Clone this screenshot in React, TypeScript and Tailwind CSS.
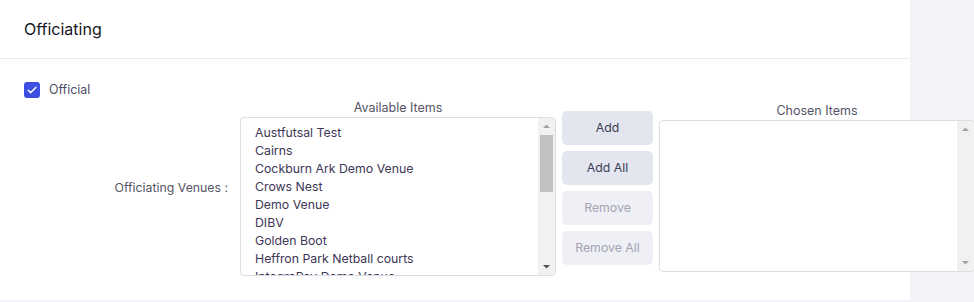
import React from "react";

const venues = [
  "Austfutsal Test",
  "Cairns",
  "Cockburn Ark Demo Venue",
  "Crows Nest",
  "Demo Venue",
  "DIBV",
  "Golden Boot",
  "Heffron Park Netball courts",
  "IntegraPay Demo Venue",
  "Kingston Park",
  "Lakeside Stadium",
];

function Arrow({ up, color }: { up: boolean; color: string }) {
  return (
    <svg width="17" height="17" viewBox="0 0 17 17">
      {up ? (
        <path d="M5 10 L12 10 L8.5 6.5 Z" fill={color} />
      ) : (
        <path d="M5 7 L12 7 L8.5 10.5 Z" fill={color} />
      )}
    </svg>
  );
}

function ScrollBar({ thumb }: { thumb: boolean }) {
  return (
    <div className="w-[17px] shrink-0 bg-[#f1f1f1] flex flex-col">
      <Arrow up color="#a3a3a3" />
      <div className="flex-1 flex flex-col">
        {thumb && <div className="mx-[2px] h-[57px] bg-[#c1c1c1]"></div>}
      </div>
      <Arrow up={false} color={thumb ? "#505050" : "#a3a3a3"} />
    </div>
  );
}

export default function App() {
  const font = { fontFamily: "Inter, 'Open Sans', sans-serif" };
  return (
    <div className="w-[974px] h-[302px] bg-[#f1f3f8] overflow-hidden" style={font}>
      <div className="w-[910px] h-[300px] bg-white">
        <div className="h-[59px] px-6 flex items-center border-b border-[#ececf0]">
          <span className="text-[16px] text-[#15151f]">Officiating</span>
        </div>
        <div className="pt-[23px] pl-6">
          <label className="flex items-center gap-[9px] h-4">
            <span className="w-4 h-4 rounded-[3px] bg-[#3d4fe3] flex items-center justify-center">
              <svg width="10" height="8" viewBox="0 0 10 8" fill="none">
                <path d="M1.2 4.2 L3.8 6.6 L8.8 1.4" stroke="white" strokeWidth="1.5" strokeLinecap="round" strokeLinejoin="round" />
              </svg>
            </span>
            <span className="text-[12.4px] text-[#4d4d66] pt-[1px]">Official</span>
          </label>
        </div>
        <div className="flex mt-[2px]">
          <div className="w-[240px] shrink-0 flex items-center justify-end pr-3">
            <span className="text-[12.3px] text-[#555566]">Officiating Venues :</span>
          </div>
          <div className="w-[316px] shrink-0 flex flex-col">
            <div className="h-[17px] flex items-center justify-center text-[12.5px] text-[#555566]">Available Items</div>
            <div className="h-[159px] border border-[#dcdde6] rounded-[4px] overflow-hidden flex">
              <div className="flex-1 overflow-hidden pt-[6px]">
                {venues.map((v) => (
                  <div key={v} className="pl-[14px] leading-[18px] text-[12.3px] text-[#3d3656] whitespace-nowrap">
                    {v}
                  </div>
                ))}
              </div>
              <ScrollBar thumb />
            </div>
          </div>
          <div className="w-[91px] shrink-0 ml-[6px] mt-[11px] flex flex-col gap-[6px]">
            <button className="h-[34px] rounded-[5px] bg-[#e3e5ef] text-[12.3px] text-[#3b3b55]">Add</button>
            <button className="h-[34px] rounded-[5px] bg-[#e3e5ef] text-[12.3px] text-[#3b3b55]">Add All</button>
            <button className="h-[34px] rounded-[5px] bg-[#eff0f5] text-[12.3px] text-[#a3a3b3]">Remove</button>
            <button className="h-[34px] rounded-[5px] bg-[#eff0f5] text-[12.3px] text-[#a3a3b3]">Remove All</button>
          </div>
          <div className="w-[316px] shrink-0 ml-[6px] flex flex-col pt-[3px]">
            <div className="h-[17px] flex items-center justify-center text-[12.5px] text-[#555566]">Chosen Items</div>
            <div className="h-[152px] border border-[#dcdde6] rounded-[4px] overflow-hidden flex bg-white">
              <div className="flex-1"></div>
              <ScrollBar thumb={false} />
            </div>
          </div>
        </div>
      </div>
    </div>
  );
}
